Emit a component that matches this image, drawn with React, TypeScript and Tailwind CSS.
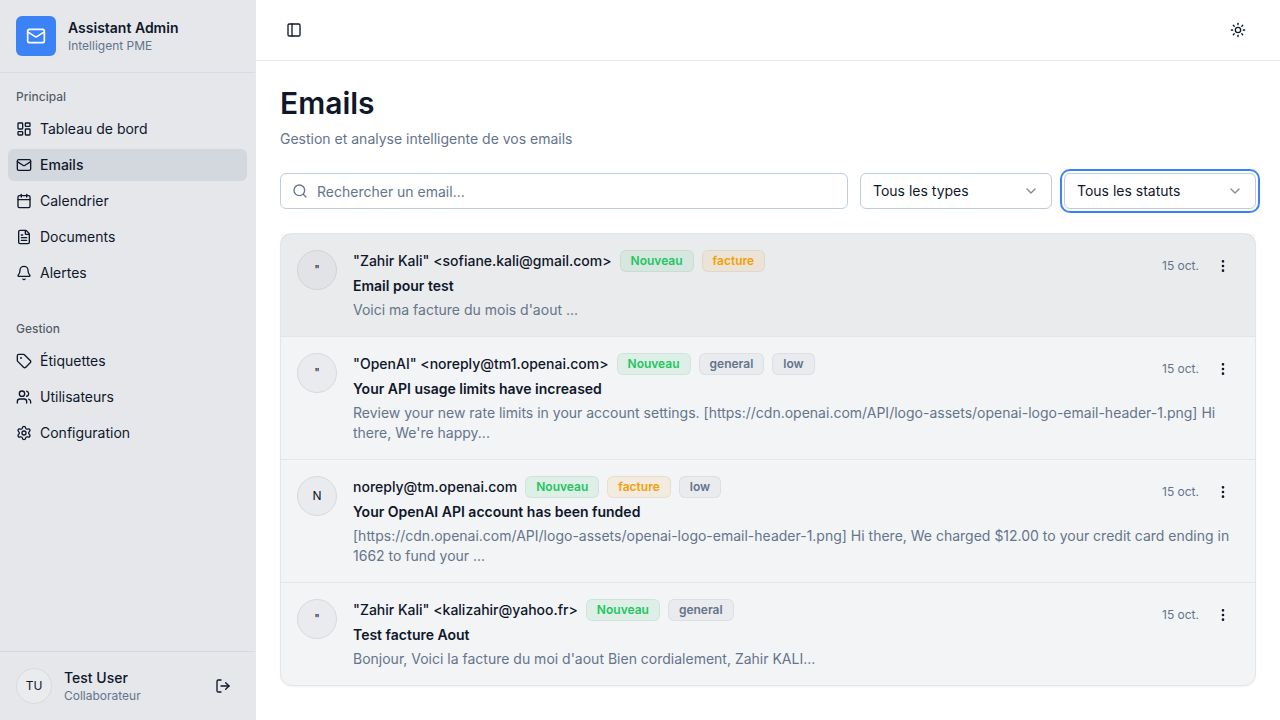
import type { LucideIcon } from "lucide-react";
import {
  Bell,
  Calendar,
  ChevronDown,
  EllipsisVertical,
  FileText,
  LayoutDashboard,
  LogOut,
  Mail,
  PanelLeft,
  Search,
  Settings,
  Sun,
  Tag,
  Users,
} from "lucide-react";

type NavItem = { label: string; icon: LucideIcon; active?: boolean };
type Tone = "green" | "amber" | "gray";
type Email = {
  initial: string;
  sender: string;
  tags: { label: string; tone: Tone }[];
  subject: string;
  preview: string;
  date: string;
  highlighted?: boolean;
};

const groups: { title: string; items: NavItem[] }[] = [
  {
    title: "Principal",
    items: [
      { label: "Tableau de bord", icon: LayoutDashboard },
      { label: "Emails", icon: Mail, active: true },
      { label: "Calendrier", icon: Calendar },
      { label: "Documents", icon: FileText },
      { label: "Alertes", icon: Bell },
    ],
  },
  {
    title: "Gestion",
    items: [
      { label: "Étiquettes", icon: Tag },
      { label: "Utilisateurs", icon: Users },
      { label: "Configuration", icon: Settings },
    ],
  },
];

const emails: Email[] = [
  {
    initial: '"',
    sender: '"Zahir Kali" <sofiane.kali@gmail.com>',
    tags: [
      { label: "Nouveau", tone: "green" },
      { label: "facture", tone: "amber" },
    ],
    subject: "Email pour test",
    preview: "Voici ma facture du mois d'aout ...",
    date: "15 oct.",
    highlighted: true,
  },
  {
    initial: '"',
    sender: '"OpenAI" <noreply@tm1.openai.com>',
    tags: [
      { label: "Nouveau", tone: "green" },
      { label: "general", tone: "gray" },
      { label: "low", tone: "gray" },
    ],
    subject: "Your API usage limits have increased",
    preview:
      "Review your new rate limits in your account settings. [https://cdn.openai.com/API/logo-assets/openai-logo-email-header-1.png] Hi there, We're happy...",
    date: "15 oct.",
  },
  {
    initial: "N",
    sender: "noreply@tm.openai.com",
    tags: [
      { label: "Nouveau", tone: "green" },
      { label: "facture", tone: "amber" },
      { label: "low", tone: "gray" },
    ],
    subject: "Your OpenAI API account has been funded",
    preview:
      "[https://cdn.openai.com/API/logo-assets/openai-logo-email-header-1.png] Hi there, We charged $12.00 to your credit card ending in 1662 to fund your ...",
    date: "15 oct.",
  },
  {
    initial: '"',
    sender: '"Zahir Kali" <kalizahir@yahoo.fr>',
    tags: [
      { label: "Nouveau", tone: "green" },
      { label: "general", tone: "gray" },
    ],
    subject: "Test facture Aout",
    preview: "Bonjour, Voici la facture du moi d'aout Bien cordialement, Zahir KALI...",
    date: "15 oct.",
  },
];

const tones: Record<Tone, string> = {
  green: "bg-[#22c55e]/10 text-[#22c55e]",
  amber: "bg-[#f59e0b]/10 text-[#f59e0b]",
  gray: "bg-[#eaebef] text-[#64748b]",
};

function Sidebar() {
  return (
    <aside className="sticky top-0 flex h-screen w-64 shrink-0 flex-col border-r border-[#e5e7eb] bg-[#e5e7eb]">
      <div className="flex items-center gap-3 border-b border-[#d5dbe8] p-4">
        <div className="flex size-10 items-center justify-center rounded-md bg-[#3b82f6] text-white">
          <Mail className="size-5" />
        </div>
        <div>
          <p className="text-sm font-semibold">Assistant Admin</p>
          <p className="text-xs text-[#64748b]">Intelligent PME</p>
        </div>
      </div>
      <nav className="flex flex-1 flex-col gap-2 overflow-auto">
        {groups.map((group) => (
          <section key={group.title} className="p-2">
            <h2 className="flex h-8 items-center px-2 text-xs font-medium text-[#0f172a]/70">{group.title}</h2>
            <ul className="flex flex-col gap-1">
              {group.items.map(({ label, icon: Icon, active }) => (
                <li key={label}>
                  <a
                    href="#"
                    aria-current={active ? "page" : undefined}
                    className={
                      active
                        ? "flex h-8 items-center gap-2 rounded-md bg-[#d3d8df] px-2 text-sm font-medium"
                        : "flex h-8 items-center gap-2 rounded-md px-2 text-sm"
                    }
                  >
                    <Icon className="size-4" />
                    {label}
                  </a>
                </li>
              ))}
            </ul>
          </section>
        ))}
      </nav>
      <div className="flex items-center gap-3 border-t border-[#d5dbe5] p-4">
        <span className="flex size-9 items-center justify-center rounded-full border border-[#d9dadd] bg-[#eaebef] text-xs">
          TU
        </span>
        <div className="min-w-0 flex-1">
          <p className="text-sm font-medium">Test User</p>
          <p className="text-xs text-[#64748b]">Collaborateur</p>
        </div>
        <button type="button" aria-label="Se déconnecter" className="flex size-8 items-center justify-center rounded-md">
          <LogOut className="size-4" />
        </button>
      </div>
    </aside>
  );
}

function Filter({ label, value, focused }: { label: string; value: string; focused?: boolean }) {
  return (
    <div className="relative w-48 shrink-0">
      <select
        aria-label={label}
        className={
          focused
            ? "h-9 w-full appearance-none rounded-md border border-[#c0cbdc] bg-white px-3 text-sm outline-none ring-2 ring-[#3b82f6] ring-offset-2"
            : "h-9 w-full appearance-none rounded-md border border-[#c0cbdc] bg-white px-3 text-sm outline-none"
        }
      >
        <option>{value}</option>
      </select>
      <ChevronDown className="pointer-events-none absolute top-1/2 right-[13px] size-4 -translate-y-1/2 opacity-50" />
    </div>
  );
}

function EmailRow({ email }: { email: Email }) {
  return (
    <li
      className={
        email.highlighted
          ? "flex gap-4 border-b border-[#e3e5e9] bg-black/[0.037] p-4 last:border-b-0"
          : "flex gap-4 border-b border-[#e3e5e9] p-4 last:border-b-0"
      }
    >
      <span
        className={
          email.highlighted
            ? "flex size-10 shrink-0 items-center justify-center rounded-full border border-[#d2d3d6] bg-[#e2e3e7] text-xs"
            : "flex size-10 shrink-0 items-center justify-center rounded-full border border-[#d8d9dc] bg-[#eaebef] text-xs"
        }
      >
        {email.initial}
      </span>
      <div className="min-w-0 flex-1">
        <div className="flex items-start justify-between gap-4">
          <div className="min-w-0">
            <div className="flex items-center gap-2">
              <span className="truncate text-sm font-medium">{email.sender}</span>
              {email.tags.map((tag) => (
                <span
                  key={tag.label}
                  className={`rounded-md border border-black/5 px-2.5 py-0.5 text-xs font-semibold ${tones[tag.tone]}`}
                >
                  {tag.label}
                </span>
              ))}
            </div>
            <h3 className="mt-1 text-sm font-semibold">{email.subject}</h3>
          </div>
          <div className="flex shrink-0 items-center gap-2">
            <time className="text-xs text-[#64748b]">{email.date}</time>
            <button type="button" aria-label="Actions" className="flex size-8 items-center justify-center rounded-md">
              <EllipsisVertical className="size-4" />
            </button>
          </div>
        </div>
        <p className="mt-1 line-clamp-2 text-sm text-[#64748b]">{email.preview}</p>
      </div>
    </li>
  );
}

export default function App() {
  return (
    <div className="flex min-h-screen bg-white font-[Inter,sans-serif] text-[#0f172a]">
      <Sidebar />
      <div className="flex min-w-0 flex-1 flex-col">
        <header className="flex items-center justify-between border-b border-[#e5e7eb] px-6 py-3">
          <button type="button" aria-label="Afficher le menu" className="flex size-7 items-center justify-center rounded-md">
            <PanelLeft className="size-4" />
          </button>
          <button type="button" aria-label="Changer de thème" className="flex size-9 items-center justify-center rounded-md">
            <Sun className="size-4" />
          </button>
        </header>
        <main className="flex flex-col gap-6 p-6">
          <div>
            <h1 className="text-3xl font-semibold">Emails</h1>
            <p className="mt-2 text-sm text-[#64748b]">Gestion et analyse intelligente de vos emails</p>
          </div>
          <div className="flex gap-3">
            <div className="relative min-w-0 flex-1">
              <Search className="absolute top-1/2 left-3 size-4 -translate-y-1/2 text-[#64748b]" />
              <input
                type="search"
                aria-label="Rechercher un email"
                placeholder="Rechercher un email..."
                className="h-9 w-full rounded-md border border-[#c0cbdc] bg-white pr-3 pl-9 text-sm outline-none placeholder:text-[#64748b]"
              />
            </div>
            <Filter label="Type" value="Tous les types" />
            <Filter label="Statut" value="Tous les statuts" focused />
          </div>
          <ul className="rounded-xl border border-[#e3e5e9] bg-[#f3f4f6] shadow-xs">
            {emails.map((email) => (
              <EmailRow key={email.sender} email={email} />
            ))}
          </ul>
        </main>
      </div>
    </div>
  );
}
